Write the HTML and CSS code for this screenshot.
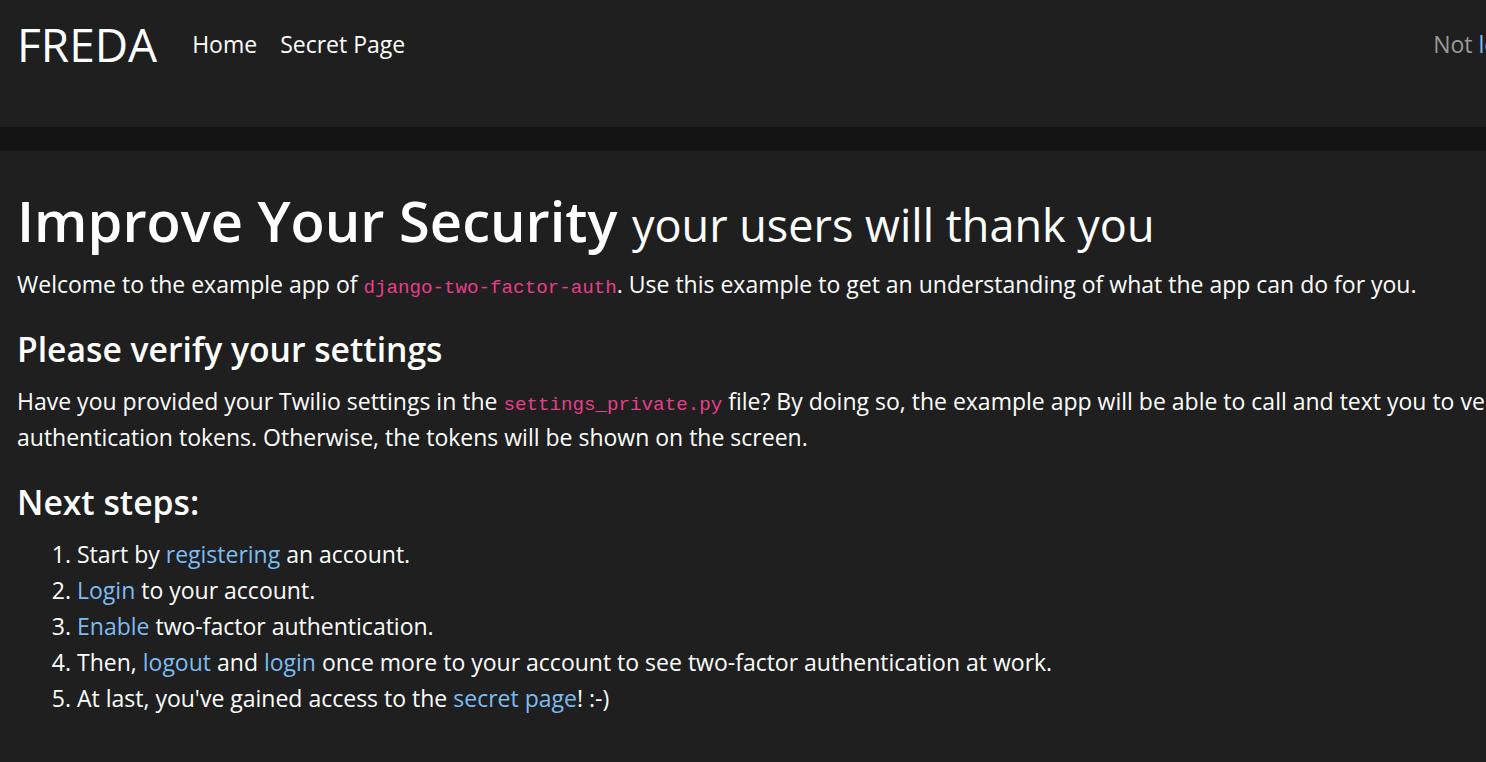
FILE: index.html
```html
<!DOCTYPE html>
<html lang="en">
<head>
<meta charset="utf-8">
<title>FREDA</title>
<link rel="stylesheet" href="styles.css">
</head>
<body>
<div class="page">
  <nav class="navbar">
    <a class="brand" href="#">FREDA</a>
    <ul class="nav-links">
      <li><a href="#">Home</a></li>
      <li><a href="#">Secret Page</a></li>
    </ul>
    <span class="nav-status">Not <a href="#">logged in</a></span>
  </nav>
  <div class="strip"></div>
  <main class="content">
    <h1 class="title">Improve Your Security <small>your users will thank you</small></h1>
    <p>Welcome to the example app of <code>django-two-factor-auth</code>. Use this example to get an understanding of what the app can do for you.</p>
    <h4>Please verify your settings</h4>
    <p>Have you provided your Twilio settings in the <code>settings_private.py</code> file? By doing so, the example app will be able to call and text you to verify your authentication tokens. Otherwise, the tokens will be shown on the screen.</p>
    <h4>Next steps:</h4>
    <ol class="steps">
      <li>Start by <a href="#">registering</a> an account.</li>
      <li><a href="#">Login</a> to your account.</li>
      <li><a href="#">Enable</a> two-factor authentication.</li>
      <li>Then, <a href="#">logout</a> and <a href="#">login</a> once more to your account to see two-factor authentication at work.</li>
      <li>At last, you've gained access to the <a href="#">secret page</a>! :-)</li>
    </ol>
  </main>
</div>
</body>
</html>
```
FILE: styles.css
```css
html, body {
  margin: 0;
  padding: 0;
  overflow: hidden;
  background: #1f1f1f;
}
body {
  font-family: "Open Sans", "Noto Sans", sans-serif;
  font-size: 23px;
  line-height: 36px;
  color: #ffffff;
}
.page {
  width: 1610px;
  height: 762px;
}
a {
  color: #7dbcf2;
  text-decoration: none;
}
.navbar {
  display: flex;
  align-items: flex-start;
  height: 127px;
  padding: 0 34px 0 17px;
  box-sizing: border-box;
  background: #1f1f1f;
}
.brand {
  color: #ffffff;
  font-size: 46px;
  line-height: 1;
  margin-top: 21px;
  margin-right: 35px;
}
.nav-links {
  display: flex;
  gap: 23px;
  list-style: none;
  margin: 26px 0 0;
  padding: 0;
}
.nav-links a {
  color: #ffffff;
}
.nav-status {
  margin-left: auto;
  margin-top: 26px;
  color: #9a9a9a;
}
.strip {
  height: 24px;
  background: #141414;
}
.content {
  padding: 33px 17px 0;
}
h1, h4, p, ol {
  margin-top: 0;
}
.title {
  font-size: 56px;
  font-weight: 600;
  line-height: 72px;
  margin-bottom: 5px;
}
.title small {
  font-size: 45px;
  font-weight: 400;
}
h4 {
  font-size: 33.7px;
  font-weight: 600;
  line-height: 43px;
  margin-bottom: 12px;
}
p {
  margin-bottom: 26px;
}
code {
  font-family: "Liberation Mono", "DejaVu Sans Mono", monospace;
  font-size: 19.2px;
  line-height: 1;
  color: #e83e8c;
}
.steps {
  padding-left: 60px;
  margin-bottom: 24px;
}
```
